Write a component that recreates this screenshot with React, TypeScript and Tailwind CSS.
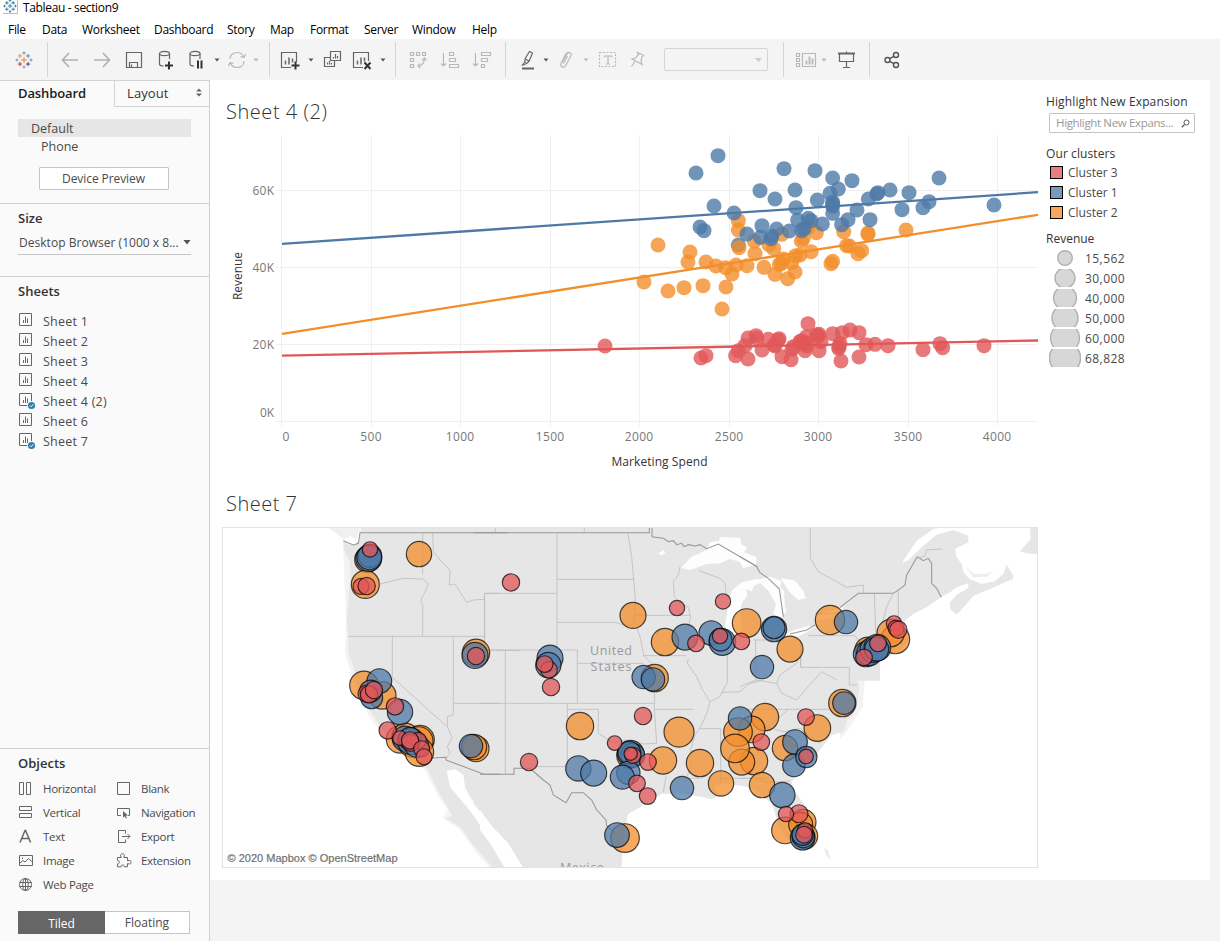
import React from "react";

type Pt = [number, number];
type Disc = [number, number, number];

const BLUE = "#4e79a7";
const ORANGE = "#f28e2b";
const RED = "#e15759";

const Svg = ({ children, c = "#666", w = 24, h = 24 }: { children: React.ReactNode; c?: string; w?: number; h?: number }) => (
  <svg width={w} height={h} viewBox={`0 0 ${w} ${h}`} fill="none" stroke={c} strokeWidth="1.2" className="shrink-0">
    {children}
  </svg>
);

const plus = (x: number, y: number, s: number) => `M${x - s} ${y}h${2 * s}M${x} ${y - s}v${2 * s}`;

const Logo = ({ mono = false }: { mono?: boolean }) => {
  const arms: [number, number, number, string][] = [
    [10, 10, 3.2, "#e8762d"],
    [5.5, 5.5, 2.4, "#eb912c"], [14.5, 5.5, 2.4, "#59879b"], [5.5, 14.5, 2.4, "#c72037"], [14.5, 14.5, 2.4, "#1f447d"],
    [10, 2.2, 1.7, "#5b879b"], [10, 17.8, 1.7, "#7099a6"], [2.2, 10, 1.7, "#7099a6"], [17.8, 10, 1.7, "#7b86b5"],
  ];
  return (
    <svg width={mono ? 14 : 18} height={mono ? 14 : 18} viewBox="0 0 20 20" fill="none" className="shrink-0">
      {arms.map(([x, y, s, c], i) => (
        <path key={i} d={plus(x, y, s)} stroke={mono ? "#3f83ab" : c} strokeWidth={mono ? 1.5 : 1} />
      ))}
    </svg>
  );
};

const Cell = ({ w, children }: { w: string; children?: React.ReactNode }) => (
  <div className={`${w} flex h-full shrink-0 items-center justify-center`}>{children}</div>
);
const Sep = ({ w }: { w: string }) => (
  <Cell w={w}><div className="h-[35px] w-px bg-[#d4d4d4]" /></Cell>
);
const Caret = ({ w, c }: { w: string; c: string }) => (
  <Cell w={w}>
    <svg width="6" height="4" viewBox="0 0 6 4" className="shrink-0"><path d="M0.5 0.5h5L3 3.5z" fill={c} /></svg>
  </Cell>
);

const G = "#b8b8b8";

const Toolbar = () => (
  <div className="flex h-[41px] items-center bg-[#f4f4f4]">
    <Cell w="w-[47px]"><Logo /></Cell>
    <Sep w="w-px" />
    <Cell w="w-[6px]" />
    <Cell w="w-[32px]"><Svg c="#b0b0b0"><path d="M20 12H4.500M11 5L4.500 12l6.500 7" strokeWidth="1.6" /></Svg></Cell>
    <Cell w="w-[32px]"><Svg c="#b0b0b0"><path d="M4 12h15.500M13 5l6.500 7-6.500 7" strokeWidth="1.6" /></Svg></Cell>
    <Cell w="w-[32px]"><Svg><path d="M4.500 4.500h15v15h-15zM7.500 19.500v-5h8v5M9.500 19v-2.500" /></Svg></Cell>
    <Cell w="w-[32px]">
      <Svg><ellipse cx="10.500" cy="5.500" rx="5" ry="2.200" /><path d="M5.500 5.500v10.500c0 1.200 1.800 2 4 2M15.500 5.500V11" /><path d={plus(15, 17.500, 4)} stroke="#333" strokeWidth="2" /></Svg>
    </Cell>
    <Cell w="w-[28px]">
      <Svg><ellipse cx="11" cy="5.500" rx="5" ry="2.200" /><path d="M6 5.500v10.500c0 1.200 1.800 2 4 2M16 5.500V11" /><path d="M14 12.500v8M17.500 12.500v8" stroke="#333" strokeWidth="2" /></Svg>
    </Cell>
    <Caret w="w-[13px]" c="#555" />
    <Cell w="w-[27px]">
      <Svg c={G}><path d="M5 11c0-4 3-6.500 7-6.500 3 0 5.500 1.500 6.500 4.500M19 13c0 4-3 6.500-7 6.500-3 0-5.500-1.500-6.500-4.500M20.500 6l-1.500 3.500-3.500-1M3.500 18L5 14.500l3.500 1" /></Svg>
    </Cell>
    <Caret w="w-[12px]" c={G} />
    <Sep w="w-[14px]" />
    <Cell w="w-[28px]">
      <Svg><path d="M13 19.500H3.500v-15h15V14" /><path d="M7.500 16.500v-4M11 16.500v-7M14.500 14.500v-4" strokeWidth="1.5" /><path d={plus(17.500, 17.500, 4)} stroke="#333" strokeWidth="2" /></Svg>
    </Cell>
    <Caret w="w-[13px]" c="#555" />
    <Cell w="w-[29px]">
      <Svg><path d="M10.500 3.500h10v9h-10zM10 9.500H4.500v9h10v-5.500M7.500 16.500v-2M9.500 16.500v-3.500M11.500 16.500v-1.500M13.500 10.500V9M15.500 10.500V6M17.500 10.500V8" /></Svg>
    </Cell>
    <Cell w="w-[32px]">
      <Svg><path d="M13 19.500H3.500v-15h15V13" /><path d="M7.500 16.500v-4M11 16.500v-7M14.500 13.500v-4" strokeWidth="1.500" /><path d="M14.500 14.500l6 6.500M20.500 14.500l-6 6.500" stroke="#333" strokeWidth="2" /></Svg>
    </Cell>
    <Caret w="w-[9px]" c="#555" />
    <Sep w="w-[17px]" />
    <Cell w="w-[28px]">
      <Svg c={G}><path d="M4.500 4.500h3v3h-3zM10.500 4.500h3v3h-3zM16.500 4.500h3v3h-3zM4.500 10.500h3v3h-3zM4.500 16.500h3v3h-3zM18.500 10c0 5-2.500 7.500-6.500 8M16 12.500l2.500-2.500 2 2.500M14 15.500L12 18l2.500 2" /></Svg>
    </Cell>
    <Cell w="w-[36px]">
      <Svg c={G}><path d="M5.500 5v13M3 15.500l2.500 2.500L8 15.500M11.500 4.500h4v3h-4zM11.500 10.500h6v3h-6zM11.500 16.500h9v3h-9z" /></Svg>
    </Cell>
    <Cell w="w-[28px]">
      <Svg c={G}><path d="M5.500 5v13M3 15.500l2.500 2.500L8 15.500M11.500 4.500h9v3h-9zM11.500 10.500h6v3h-6zM11.500 16.500h3v3h-3z" /></Svg>
    </Cell>
    <Sep w="w-[18px]" />
    <Cell w="w-[27px]">
      <Svg><path d="M9.500 10l4-6.500 3 1.500-3.500 8.500-2.500 2-2-1.200zM9.200 11l4 2.200M8.500 14.500l-2 2.500 3-.5" /><path d="M6 20.500h12" strokeWidth="2" /></Svg>
    </Cell>
    <Caret w="w-[9px]" c="#555" />
    <Cell w="w-[31px]">
      <Svg c={G}><path d="M8 14.500l5-8.500c1-2 5-1.500 4 1.500L12 17c-1.500 3.500-6.500 2-5-1.500l4.500-9c1.500-2.800 4-2.500 5-1.500M9.500 15.500l4-7.500" /></Svg>
    </Cell>
    <Caret w="w-[9px]" c={G} />
    <Cell w="w-[35px]">
      <Svg c={G}><rect x="3.500" y="4.500" width="16" height="14" strokeDasharray="2 1.500" /><path d="M8.500 9.500V8h7v1.500M12 8v8M10 16h4" /></Svg>
    </Cell>
    <Cell w="w-[24px]">
      <Svg c={G}><path d="M12.500 4.500l6 3-1.500 1-1 4.500 1 3.500-10-5.500 3.500-1 3-3.500zM10 13.500L6.500 18.500" /></Svg>
    </Cell>
    <div className="ml-[15px] flex h-[23px] w-[104px] items-center justify-end rounded-[2px] border border-[#d4d4d4] pr-[5px]">
      <svg width="7" height="4" viewBox="0 0 7 4"><path d="M0 0h7L3.500 4z" fill="#ccc" /></svg>
    </div>
    <Sep w="w-[30px]" />
    <Cell w="w-[16px]">
      <Svg c={G}><path d="M2.500 5.500h3v3h-3zM2.500 10.500h3v3h-3zM2.500 15.500h3v3h-3zM8.500 5.500h13v13h-13z" /><path d="M12.500 16.500v-4M15.500 16.500v-8M18.500 16.500v-6" strokeWidth="1.800" /></Svg>
    </Cell>
    <Caret w="w-[19px]" c={G} />
    <Cell w="w-[25px]">
      <Svg><path d="M4 5.500h17" strokeWidth="2" /><path d="M5.500 6v7.500h14V6M12.500 3.500v2M12.500 14v5.500M9 19.500h7" /></Svg>
    </Cell>
    <Sep w="w-[22px]" />
    <Cell w="w-[24px]">
      <Svg c="#555"><g strokeWidth="1.400"><circle cx="7.500" cy="12" r="2.500" /><circle cx="16" cy="7" r="2.500" /><circle cx="16" cy="17" r="2.500" /><path d="M9.800 10.700l4-2.400M9.800 13.300l4 2.400" /></g></Svg>
    </Cell>
  </div>
);

const menu: [string, string][] = [
  ["File", "w-[34px]"], ["Data", "w-[40px]"], ["Worksheet", "w-[72px]"], ["Dashboard", "w-[73px]"], ["Story", "w-[43px]"],
  ["Map", "w-[40px]"], ["Format", "w-[54px]"], ["Server", "w-[48px]"], ["Window", "w-[60px]"], ["Help", "w-[40px]"],
];

const SheetIcon = ({ used }: { used: boolean }) => (
  <svg width="17" height="18" viewBox="0 0 17 18" fill="none" className="shrink-0">
    <path d="M0.500 1.500h12v12h-12z" stroke="#666" />
    <path d="M4.500 11V8M6.500 11V4.500M8.500 11V6.500" stroke="#666" />
    {used && <><circle cx="12.500" cy="13.500" r="4.400" fill="#fafafa" /><circle cx="12.500" cy="13.500" r="3.600" fill="#2f7fa6" /><path d="M10.800 13.500l1.300 1.300 2.200-2.400" stroke="#fff" /></>}
  </svg>
);

const sheets: [string, boolean][] = [
  ["Sheet 1", false], ["Sheet 2", false], ["Sheet 3", false], ["Sheet 4", false], ["Sheet 4 (2)", true], ["Sheet 6", false], ["Sheet 7", true],
];

const objects: [string, React.ReactNode][] = [
  ["Horizontal", <path d="M1.500 1.500h4v12h-4zM8.500 1.500h4v12h-4z" />],
  ["Blank", <path d="M1.500 1.500h12v12h-12z" />],
  ["Vertical", <path d="M1.500 1.500h12v4h-12zM1.500 8.500h12v4h-12z" />],
  ["Navigation", <><path d="M5 10.500H1.500v-7h12v7H12" /><path d="M7 6l5 4.500-2.300.2 1.300 2.300-1 .5-1.200-2.300L7 12.800z" fill="#666" stroke="none" /></>],
  ["Text", <path d="M2 13.500L7 1.500h.6l5 12M3.800 9.500h7" strokeWidth="1.500" />],
  ["Export", <path d="M9.500 4.500v-3h-7v12h7v-3M6 7.500h8M11.500 5l2.500 2.500L11.500 10" />],
  ["Image", <path d="M1.500 2.500h13v10h-13zM2 10l3-2.500 2 1.500 3.500-3.500 4 3.500M4.500 4.500v1.500" />],
  ["Extension", <path d="M1.500 4.500h3.700C3.800 2 5 .8 6.500.8S9.200 2 7.800 4.500h3.700v3.300c2.500-1 3.700.2 3.700 1.400s-1.200 2.400-3.700 1.400v3.200H8.300c.4-2.400-3.600-2.400-3.200 0H1.500v-3c2.600.4 2.600-3.500 0-3.200z" />],
  ["Web Page", <><circle cx="7.500" cy="7.500" r="6" /><ellipse cx="7.500" cy="7.500" rx="2.800" ry="6" /><path d="M1.500 5.500h12M1.500 9.500h12M7.500 1.500v12" /></>],
];

const Sidebar = () => (
  <aside className="flex w-[210px] shrink-0 flex-col border-r border-[#d0d0d0] bg-[#fafafa] text-[12px] text-[#4a4a4a]">
    <div className="flex h-[27px] border-t border-[#d4d4d4]">
      <div className="w-[114px] pl-[18px] text-[13px] font-semibold leading-[24px] tracking-[-0.1px] text-[#1c1c1c]">Dashboard</div>
      <div className="flex flex-1 items-center justify-between border-b border-l border-[#d4d4d4] pl-3 pr-[7px] text-[13px] tracking-[0.1px] text-[#333]">
        <span>Layout</span>
        <svg width="6" height="9" viewBox="0 0 6 9" fill="#666" className="-mt-[2px]"><path d="M0 3.600h6L3 0.500zM0 5.400h6L3 8.500z" /></svg>
      </div>
    </div>
    <div className="flex h-[97px] flex-col border-b border-[#d0d0d0] pt-3">
      <div className="ml-[18px] h-[18px] w-[173px] bg-[#e6e6e6] pl-[13px] text-[12.500px] leading-[19px]">Default</div>
      <div className="h-[18px] pl-[41px] text-[12.500px] leading-[19px]">Phone</div>
      <div className="ml-[39px] mt-[12px] h-[23px] w-[130px] rounded-[1px] border border-[#c4c4c4] bg-white pr-px text-center leading-[21px] tracking-[-0.08px]">Device Preview</div>
    </div>
    <div className="flex h-[73px] flex-col border-b border-[#d0d0d0] pl-[18px] pt-[5px]">
      <div className="h-[18px] text-[13px] font-semibold leading-[19px] text-[#333]">Size</div>
      <div className="mt-[6px] flex h-[22px] w-[173px] items-center justify-between border-b border-[#c4c4c4] pb-[2px] pl-px">
        <span className="whitespace-nowrap tracking-[0.03px]">Desktop Browser (1000 x 8...</span>
        <svg width="8" height="5" viewBox="0 0 8 5"><path d="M0.500 0h7L4 4.500z" fill="#555" /></svg>
      </div>
    </div>
    <div className="flex flex-1 flex-col pl-[18px] pt-[5px]">
      <div className="h-[29px] text-[13px] font-semibold leading-[18px] text-[#333]">Sheets</div>
      {sheets.map(([name, used]) => (
        <div key={name} className="flex h-5 items-center gap-2 pl-px">
          <SheetIcon used={used} />
          <span className="-ml-px pt-[2px] text-[12.500px] tracking-[0.25px]">{name}</span>
        </div>
      ))}
    </div>
    <div className="flex h-[193px] flex-col border-t border-[#d0d0d0] pl-[18px] pt-[5px]">
      <div className="h-[22px] text-[13px] font-semibold leading-[19px] text-[#333]">Objects</div>
      <div className="grid grid-cols-[98px_92px] text-[11.500px] tracking-[-0.3px]">
        {objects.map(([name, icon]) => (
          <div key={name} className="flex h-6 items-center gap-[9px]">
            <svg width="16" height="15" viewBox="0 0 16 15" fill="none" stroke="#666" className="shrink-0">{icon}</svg>
            <span className="whitespace-nowrap pt-[2px]">{name}</span>
          </div>
        ))}
      </div>
      <div className="mt-[15px] flex h-[23px] w-[172px] border border-[#c4c4c4] bg-white text-center leading-[22px]">
        <div className="-my-px -ml-px w-[87px] bg-[#666] leading-[25px] text-white">Tiled</div>
        <div className="flex-1">Floating</div>
      </div>
    </div>
  </aside>
);

const scatterOrange: Pt[] = [
  [355, 272], [355, 300], [114, 345], [210, 366], [204, 396], [258, 396], [288, 408], [317, 413], [348, 405], [381, 407], [336, 432],
  [318, 471], [249, 467], [192, 473], [144, 483], [72, 456], [306, 537], [403, 334], [405, 371], [432, 412], [447, 344], [461, 356],
  [465, 433], [503, 446], [525, 426], [485, 313], [565, 292], [589, 308], [550, 325], [544, 333], [573, 365], [540, 375], [527, 377],
  [515, 398], [490, 387], [478, 403], [485, 400], [671, 305], [744, 309], [744, 313], [858, 300], [680, 347], [688, 348], [725, 362],
  [714, 371], [633, 401], [638, 394],
];
const scatterBlue: Pt[] = [
  [294, 77], [228, 129], [492, 116], [585, 122], [638, 144], [696, 152], [957, 144], [420, 182], [525, 180], [655, 177], [630, 190],
  [465, 207], [592, 210], [770, 192], [774, 188], [810, 180], [867, 188], [745, 207], [638, 216], [638, 222], [638, 229], [711, 240],
  [846, 239], [909, 233], [927, 215], [1122, 225], [282, 228], [342, 249], [240, 291], [252, 302], [528, 233], [638, 250], [684, 269],
  [750, 269], [533, 270], [565, 265], [573, 272], [607, 282], [665, 284], [426, 287], [470, 297], [508, 303], [381, 312], [421, 322],
  [455, 318], [453, 326], [552, 296], [355, 345], [545, 302],
];
const scatterRed: Pt[] = [
  [564, 581], [690, 600], [638, 611], [667, 608], [717, 608], [384, 624], [408, 617], [411, 625], [445, 628], [477, 626], [475, 631],
  [462, 645], [465, 648], [375, 647], [355, 662], [347, 677], [384, 687], [243, 684], [258, 677], [426, 660], [486, 680], [513, 689],
  [516, 658], [520, 650], [540, 635], [545, 632], [548, 640], [560, 620], [560, 640], [555, 662], [590, 614], [597, 613], [595, 619],
  [603, 635], [597, 662], [560, 648], [660, 640], [657, 650], [656, 655], [663, 693], [717, 681], [738, 644], [765, 643], [804, 647],
  [909, 659], [960, 641], [968, 653], [1092, 647], [-45, 648],
];

const dots = (pts: Pt[], color: string) =>
  pts.map(([x, y], i) => <circle key={color + i} cx={620 + x / 3} cy={130 + y / 3} r="7.500" fill={color} fillOpacity="0.8" />);

const Scatter = () => (
  <svg width="816" height="339" viewBox="222 132 816 339" className="block" fontFamily='"Open Sans", sans-serif' fontSize="12">
    <g stroke="#f0f0f0" shapeRendering="crispEdges">
      {[281, 371, 460, 550, 639, 729, 818, 908, 997].map((x) => <path key={x} d={`M${x + 0.5} 135V426`} />)}
      {[190, 267, 344, 421].map((y) => <path key={y} d={`M276 ${y + 0.5}H1038`} />)}
    </g>
    <g strokeWidth="2.300">
      <path d="M282 243.800L1038 192.200" stroke={BLUE} />
      <path d="M282 333.800L1038 214.800" stroke={ORANGE} />
      <path d="M282 355.700L1038 340.500" stroke={RED} />
    </g>
    {dots(scatterOrange, ORANGE)}
    {dots(scatterBlue, BLUE)}
    {dots([[357, 353]], ORANGE)}
    {dots(scatterRed, RED)}
    <g fill="#787878">
      {([["60K", 195], ["40K", 272], ["20K", 349], ["0K", 417]] as [string, number][]).map(([t, y]) => (
        <text key={t} x="274" y={y} textAnchor="end" textLength={t.length === 2 ? 14 : 21.5}>{t}</text>
      ))}
      {([["0", 286], ["500", 371], ["1000", 460], ["1500", 550], ["2000", 639], ["2500", 729], ["3000", 818], ["3500", 908], ["4000", 997]] as [string, number][]).map(([t, x]) => (
        <text key={t} x={x} y="441" textAnchor="middle" textLength={t.length * 7.1}>{t}</text>
      ))}
    </g>
    <text x="611.500" y="465.500" fill="#333" textLength="96">Marketing Spend</text>
    <text transform="translate(242 300) rotate(-90)" fill="#333" textLength="48">Revenue</text>
  </svg>
);

const place = (ox: number, oy: number, list: Disc[]): Disc[] => list.map(([x, y, r]) => [ox + x / 3, oy + 0.4 + y / 3, r / 3]);

const mapOrange: Disc[] = [
  ...place(220, 520, [
    [597, 101, 38], [442, 118, 38], [436, 192, 42], [768, 397, 41], [432, 495, 43], [487, 525, 41], [540, 657, 41],
    [556, 648, 40], [575, 670, 40], [600, 658, 43], [596, 662, 43], [598, 695, 43], [768, 685, 39], [762, 680, 38],
  ]),
  ...place(480, 520, [
    [459, 285, 39], [555, 365, 41], [524, 473, 41], [300, 617, 41], [597, 635, 45], [549, 720, 41], [660, 728, 41], [723, 789, 38],
    [448, 706, 38], [435, 953, 43], [800, 308, 43],
  ]),
  ...place(740, 520, [
    [75, 590, 41], [35, 627, 40], [-6, 635, 43], [42, 722, 41], [5, 725, 39], [-15, 684, 43], [66, 794, 38], [135, 683, 38],
    [232, 623, 40], [307, 548, 41], [270, 299, 44], [150, 386, 39], [466, 357, 43], [452, 338, 41], [383, 388, 38], [190, 905, 38],
    [135, 930, 40], [182, 912, 36], [195, 947, 38],
  ]),
];
const mapBlue: Disc[] = [
  ...place(220, 520, [
    [446, 114, 39], [450, 106, 35], [448, 111, 37], [765, 405, 39], [478, 482, 37], [455, 532, 33], [452, 512, 33],
    [540, 575, 38], [555, 655, 38], [573, 663, 40], [590, 675, 36], [570, 655, 34], [753, 677, 35],
  ]),
  ...place(480, 520, [
    [210, 413, 39], [205, 434, 38], [491, 470, 35], [519, 477, 35], [615, 350, 39], [694, 338, 37], [727, 365, 40], [722, 358, 34],
    [452, 700, 40], [458, 705, 36], [448, 697, 34], [445, 757, 35], [427, 770, 36], [295, 744, 38], [341, 758, 39],
    [606, 803, 35], [411, 944, 37],
  ]),
  ...place(740, 520, [
    [0, 594, 35], [102, 326, 38], [102, 322, 33], [318, 305, 35], [66, 440, 35], [312, 548, 34], [165, 665, 37], [162, 735, 34],
    [199, 710, 32], [127, 824, 38], [378, 401, 38], [388, 398, 38], [398, 388, 38], [412, 382, 40], [410, 386, 36], [188, 952, 37],
    [190, 948, 34], [188, 943, 32],
  ]),
];
const mapRed: Disc[] = [
  ...place(220, 520, [
    [450, 87, 23], [423, 198, 24], [440, 197, 26], [768, 407, 26], [440, 520, 26], [447, 522, 26], [462, 509, 26], [525, 558, 26],
    [503, 630, 26], [540, 653, 22], [595, 660, 24], [572, 667, 26], [570, 660, 26], [605, 685, 24], [612, 709, 24],
  ]),
  ...place(480, 520, [
    [93, 186, 26], [591, 263, 23], [729, 243, 23], [648, 369, 25], [720, 347, 23], [784, 363, 25], [207, 448, 25], [194, 431, 25],
    [213, 500, 26], [489, 587, 26], [404, 668, 22], [459, 705, 24], [452, 700, 20], [504, 725, 25], [471, 789, 25], [503, 827, 25],
    [147, 725, 26],
  ]),
  ...place(740, 520, [
    [462, 309, 23], [468, 323, 24], [475, 328, 26], [414, 369, 25], [372, 411, 25], [198, 590, 25], [64, 665, 25], [198, 708, 22],
    [177, 880, 27], [138, 881, 23], [195, 930, 23], [192, 943, 25],
  ]),
];

const marks = (list: Disc[], color: string) =>
  list.map(([x, y, r], i) => (
    <circle key={color + i} cx={x} cy={y} r={r} fill={color} fillOpacity="0.75" stroke="#000" strokeOpacity="0.7" strokeWidth="1.200" />
  ));

const UsMap = () => (
  <svg width="814" height="339" viewBox="223 528 814 339" className="block">
    <g fill="#e6e6e6">
      <g transform="translate(220 520) scale(0.33333)">
        <path fill="#f0f0f0" d="M322 20L372 58 392 48 408 60 425 20z" />
        <path fill="#f3f3f3" d="M370 92L378 300 375 400 405 500 445 585 495 655 615 750 658 835 685 870 668 895 716 925 770 1000 815 1050 850 1050 850 60 500 60z" />
        <path d="M425 20L416 60 405 75 385 73 370 62 370 88 388 120 392 160 385 240 380 300 385 350 385 400 400 440 412 500 430 540 455 580 482 620 502 655 545 685 590 722 622 745 642 790 667 835 697 888 678 895 722 922 748 960 782 1000 825 1050 860 1060 860 20z" />
        <path fill="#fff" d="M680 752L706 748 730 765 736 805 750 830 780 870 840 925 870 960 912 1044 858 1044 830 980 790 930 750 872 720 836 690 800z" />
      </g>
      <g transform="translate(480 520) scale(0.33333)">
        <path d="M60 20H860V800L800 800 747 792 725 790 700 800 720 825 695 838 670 832 600 820 545 822 500 850 445 882 430 940 424 1050 130 1050 60 960z" />
        <path d="M-20 20H80V960L40 925-20 850z" />
        <path fill="#fff" d="M0 870L40 925 85 970 130 1044H75L30 970 0 930z" />
      </g>
      <g transform="translate(740 520) scale(0.33333)">
        <path fill="#f3f3f3" d="M300 430L450 400 408 438 375 470 368 560 330 620 300 660z" />
        <path d="M-20 300L510 330 440 395 400 430 370 452 350 475 358 500 350 560 322 600 310 635 275 645 240 690 200 740 170 765 155 785 165 815 190 850 214 895 230 940 220 985 190 990 165 975 140 955 115 915 105 880 95 850 75 835 50 812 0 790-20 790z" />
        <path d="M252 985L264 990 272 1020 258 1006z" fill="#ececec" />
      </g>
      <g transform="translate(660 524) scale(0.33333)">
        <path d="M-20 9H860L820 15 770 50 725 118 745 108 790 65 830 32 880 18 925 35 925 55 885 75 890 100 905 120 910 145 930 165 965 180 1005 172 1030 150 1040 122 1058 150 1060 165 1035 175 990 195 940 215 915 245 890 272 870 255 870 235 890 212 925 192 925 178 890 190 870 205 845 218 800 250 760 270 735 290 730 315 748 345 720 380 690 395 660 415 V470H-20z" />
        <path fill="#ededed" d="M918 130L942 150 978 150 1004 138 980 158 940 160z" />
        <path d="M1110 9L1112 45 1080 82 1100 88 1140 92V9z" />
      </g>
    </g>
    <g transform="translate(660 524) scale(0.33333)" fill="#fdfdfd">
      <path d="M62 132L95 98 140 78 150 55 178 50 180 38 240 42 245 62 262 70 252 85 290 100 288 122 250 133 240 115 210 105 180 118 140 120 90 138z" />
      <path d="M196 300L205 240 215 200 245 175 290 165 318 168 282 185 275 202 258 196 262 215 247 235 240 260 245 320 215 345 198 320z" />
      <path d="M290 168L330 158 365 170 360 190 372 200 375 250 380 262 360 285 340 270 348 240 325 200z" />
      <path d="M362 162L405 170 430 200 438 222 415 228 385 200z" />
      <path d="M350 347L380 330 400 318 450 305 470 308 420 335 370 352zM462 282L500 262 550 250 545 272 480 290z" />
      <path d="M-5 88L12 78 16 88 4 94z" />
    </g>

    <g fill="none" stroke="#bdbdbd" strokeWidth="2.400">
      <g transform="translate(220 520) scale(0.33333)">
        <path d="M385 349H794M517 349V472L683 622M608 40V165M608 260V349M793 220V390M793 220H840M700 349V550H840M793 390L900 392" />
        <path d="M480 192L550 175 610 177 625 192 613 220 602 240 610 260M638 40L640 95 660 120 690 150 688 195 705 192 728 228 740 247 760 240 792 238M683 622L696 652 682 680 690 700 678 714M683 622L682 590 700 585V550" />
      </g>
      <g transform="translate(480 520) scale(0.33333)">
        <path d="M231 40V390M231 178H463M14 220H231M14 220V390M231 307H405L440 318 462 310M0 390H292V550M292 430H490M0 550H523M76 390V763M262 550V740H160M262 568H355V640M523 550V568H640M466 286H630M490 407H620M523 568L530 670M660 626H722M722 626V790M742 362V490M722 775H860M550 815L558 770M616 775H660M46 23V38M313 23V38" />
        <path d="M444 40L455 110 462 190 466 240 462 300 480 350 492 407 515 430 523 470 524 550M355 640L400 668 440 660 490 672 530 670M600 140L595 165 580 185 583 230 600 248 625 262 632 290 625 320M625 415L622 430 650 470 665 505 690 545 682 575 665 615 645 645 632 690 635 740 615 780M656 152L720 175 735 190 738 220M690 545L720 530 740 490M727 517L780 515 810 490 850 480" />
      </g>
      <g transform="translate(740 520) scale(0.33333)">
        <path d="M211 23V115L235 155 290 185 320 202 370 195 370 218M403 220L405 280 408 350M475 210V290M460 220L440 260 430 300M225 280H290M205 347H345L355 360M182 360V442H328V495H352M182 400V440M47 360V480M40 360H130M0 500L47 480 110 490 120 465 170 430 180 400M110 490L125 520 170 540 200 505 245 455 290 480M0 568L270 568M145 568L120 590 80 620 130 635 180 625 240 670M0 775H45L80 787 150 783" />
        <path d="M535 115L555 108 560 90 605 87" />
      </g>
    </g>
    <g fill="none" stroke="#989898" strokeWidth="3.200">
      <g transform="translate(220 520) scale(0.33333)"><path d="M370 62L400 75 415 70 420 38H862M638 714L678 712 678 720 792 763H840" /></g>
      <g transform="translate(480 520) scale(0.33333)">
        <path d="M-20 38H508V24M516 24V50L550 55 565 65 580 62 590 74 605 70 612 80 625 74 645 78 660 74 680 86 715 72 832 140M0 763H102V745H150L190 780 210 795 220 825 258 848 275 818H310L335 840 350 870 378 900 380 918 405 940" />
      </g>
      <g transform="translate(740 520) scale(0.33333)">
        <path d="M0 110L50 140 60 158 85 175 118 207 130 290 M150 342L200 330 225 315M300 262L355 220H460L478 208 495 195 500 165 532 110 550 122 565 115 575 130V190L590 205 604 232" />
      </g>
    </g>
    <g fontFamily='"Open Sans", sans-serif' fill="#999" fontSize="12.500">
      <text x="590" y="655" textLength="42">United</text>
      <text x="590.500" y="671" textLength="41">States</text>
      <text x="560" y="872" textLength="44">Mexico</text>
    </g>
    {marks(mapOrange, ORANGE)}
    {marks(mapBlue, BLUE)}
    {marks(mapRed, RED)}
    <text x="227.500" y="862" fontFamily='"Liberation Sans", Arial, sans-serif' fontSize="11" fill="#707070" stroke="#707070" strokeWidth="0.200" textLength="170">© 2020 Mapbox © OpenStreetMap</text>
  </svg>
);

const clusters: [string, string][] = [["Cluster 3", "bg-[#e87e80]"], ["Cluster 1", "bg-[#7a9abd]"], ["Cluster 2", "bg-[#f5a85e]"]];
const sizes: [string, number][] = [["15,562", 7.3], ["30,000", 10], ["40,000", 11.5], ["50,000", 13], ["60,000", 14.5], ["68,828", 15.6]];

const Legend = () => (
  <div className="flex w-[164px] flex-col pl-1 pt-[12px] text-[12px] text-[#333]">
    <div className="h-[20px] whitespace-nowrap pl-1 leading-[19px] tracking-[0.12px]">Highlight New Expansion</div>
    <div className="ml-[7px] mt-px flex h-[20px] w-[146px] items-center justify-between rounded-[1px] border border-[#c4c4c4] pl-[6px] pr-1 text-[11.500px] text-[#999]">
      <span className="whitespace-nowrap tracking-[-0.35px]">Highlight New Expans...</span>
      <svg width="9" height="9" viewBox="0 0 9 9" fill="none" stroke="#555"><circle cx="5.500" cy="3.500" r="2.500" /><path d="M3.600 5.400L0.800 8.200" strokeWidth="1.300" /></svg>
    </div>
    <div className="mt-[11px] h-[18px] pl-1 leading-[19px] tracking-[0.1px]">Our clusters</div>
    {clusters.map(([name, bg]) => (
      <div key={name} className="flex h-5 items-center gap-[5px] pl-2">
        <div className={`size-[13px] border border-black ${bg}`} />
        <span className="pt-[2px] text-[#4a4a4a]">{name}</span>
      </div>
    ))}
    <div className="mt-[8px] h-[18px] pl-1 leading-[18px]">Revenue</div>
    {sizes.map(([label, r]) => (
      <div key={label} className="flex h-5 items-center gap-[4px] pl-[7px]">
        <svg width="32" height="18" viewBox="-16 -9 32 18"><circle r={r} fill="#d7d7d7" stroke="#b0b0b0" strokeWidth="1.400" /></svg>
        <span className="pt-[2px] tracking-[0.45px] text-[#4a4a4a]">{label}</span>
      </div>
    ))}
  </div>
);

export default function App() {
  return (
    <div className="flex h-[941px] w-[1220px] flex-col overflow-hidden bg-white font-['Open_Sans',sans-serif]">
      <div className="flex h-4 items-center gap-[5px] pl-[3px] text-[12px] tracking-[-0.35px] text-black">
        <div className="-mt-1 border-b border-r border-[#bbb]"><Logo mono /></div>
        <span>Tableau - section9</span>
      </div>
      <nav className="flex h-[23px] items-center pl-2 pt-[5px] text-[12px] tracking-[-0.3px] text-black">
        {menu.map(([name, w]) => <div key={name} className={`${w} shrink-0`}>{name}</div>)}
      </nav>
      <Toolbar />
      <div className="flex min-h-0 flex-1 bg-[#f4f4f4]">
        <Sidebar />
        <main className="flex h-[800px] w-[1000px] bg-white pl-3">
          <div className="flex w-[816px] flex-col">
            <h1 className="h-[52px] pl-1 pt-[18px] text-[20px] font-light leading-[28px] tracking-[0.55px] text-[#333]">Sheet 4 (2)</h1>
            <Scatter />
            <h1 className="h-[56px] pl-1 pt-[19px] text-[20px] font-light leading-[28px] tracking-[0.5px] text-[#333]">Sheet 7</h1>
            <div className="h-[341px] w-[816px] overflow-hidden border border-[#e2e2e2]"><UsMap /></div>
          </div>
          <Legend />
        </main>
      </div>
    </div>
  );
}
